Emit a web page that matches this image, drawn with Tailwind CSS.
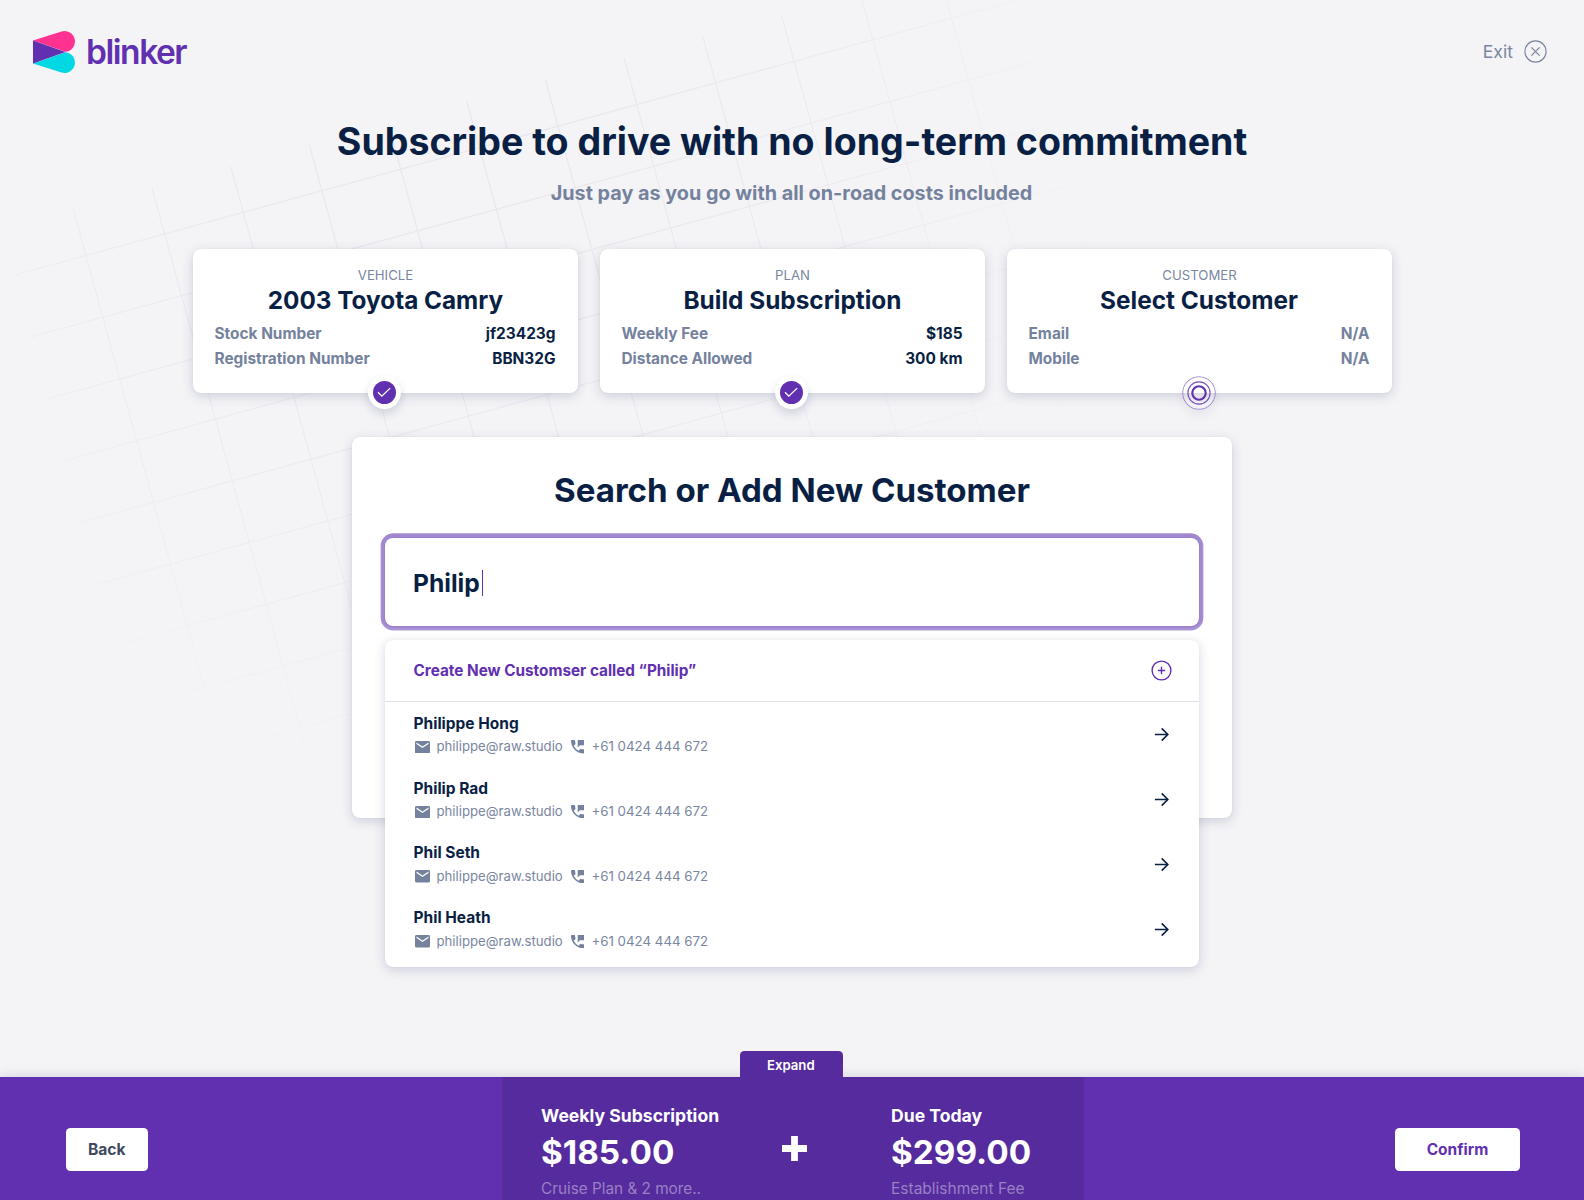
<!DOCTYPE html>
<html lang="en">
<head>
<meta charset="utf-8">
<title>Blinker – Subscribe</title>
<script src="https://cdn.jsdelivr.net/npm/@tailwindcss/browser@4"></script>
</head>
<body class="bg-[#f4f4f7] font-[Inter,'Liberation_Sans',sans-serif] text-[#0a1f44]">
<div class="relative isolate flex h-[1200px] w-[1584px] flex-col overflow-hidden">

  <!-- Decorative tilted grid -->
  <svg id="grid" class="absolute inset-0 -z-10" width="1584" height="1200" viewBox="0 0 1584 1200" fill="none">
    <defs>
      <radialGradient id="fade" gradientUnits="userSpaceOnUse" cx="470" cy="0" r="690">
        <stop offset="0" stop-color="#e5e5eb"/>
        <stop offset=".45" stop-color="#e9e9ee"/>
        <stop offset="1" stop-color="#f4f4f7"/>
      </radialGradient>
    </defs>
    <g transform="translate(13 275.5) rotate(-15.33)">
      <path stroke="url(#fade)" stroke-width="1.1" d="M0 0H1042M0 64H1042M0 128H1042M0 192H1042M0 256H1042M0 320H1042M0 384H1042M0 448H1042M0 512H1042M0 576H1042M75.6 -47.5V640M157.2 -47.5V640M238.8 -47.5V640M320.4 -47.5V640M402 -47.5V640M483.6 -47.5V640M565.2 -47.5V640M646.8 -47.5V640M728.4 -47.5V640M810 -47.5V640M891.6 -47.5V640M973.2 -47.5V640"/>
    </g>
  </svg>

  <header class="flex h-[103px] items-center justify-between pl-[33px] pr-[37px]">
    <div class="flex items-center gap-[12px]">
      <svg width="42" height="42" viewBox="0 0 42 42">
        <path fill="#ff3291" d="M0 9.6 28.5 .5A10.4 10.4 0 1 1 32.5 20.8L0 9.6Z"/>
        <path fill="#00d8e4" d="M0 32.4 28.5 41.5A10.4 10.4 0 1 0 32.5 21.2Z"/>
        <path fill="#6130b0" d="M0 9.6 32.5 21 0 32.4Z"/>
      </svg>
      <span class="-ml-px text-[33.5px] leading-[42px] font-semibold tracking-[-1.45px] text-[#6130b0]">blinker</span>
    </div>
    <div class="flex items-center gap-[11px] text-[#7a869f]">
      <span class="pt-px text-[17.6px] leading-6">Exit</span>
      <svg width="23" height="23" viewBox="0 0 23 23" fill="none" stroke="currentColor" stroke-width="1.1"><circle cx="11.5" cy="11.5" r="10.6"/><path stroke-width="1.3" d="m7.4 7.4 8.2 8.2M15.6 7.4l-8.2 8.2"/></svg>
    </div>
  </header>

  <h1 class="mt-[14.5px] text-center text-[37.55px] leading-[48px] font-bold">Subscribe to drive with no long-term commitment</h1>
  <p class="mt-[15px] pr-px text-center text-[19.8px] leading-[25px] font-bold text-[#75829d]">Just pay as you go with all on-road costs included</p>

  <section class="mt-[43px] flex justify-center gap-[22px]">
    <div class="relative h-[144px] w-[385px] rounded-[8px] bg-white px-[22px] pt-[19px] shadow-[0_0_1px_rgba(10,31,68,0.1),0_3px_12px_rgba(30,35,90,0.18)]">
      <p class="-mt-px pl-px text-center text-[13.2px] leading-[16.5px] text-[#7a869f]">VEHICLE</p>
      <h2 class="mt-px pl-px text-center text-[24.3px] leading-[33px] font-bold">2003 Toyota Camry</h2>
      <dl class="mt-[3.5px] text-[15.4px] leading-[25.4px] font-bold">
        <div class="flex justify-between"><dt class="text-[#75829d]">Stock Number</dt><dd>jf23423g</dd></div>
        <div class="flex justify-between"><dt class="text-[#75829d]">Registration Number</dt><dd>BBN32G</dd></div>
      </dl>
      <svg class="absolute -bottom-[16.5px] left-[175.5px] rounded-full shadow-[0_5px_10px_rgba(30,35,90,0.16)]" width="33" height="33" viewBox="0 0 33 33" fill="none"><circle cx="16.5" cy="16.5" r="16.5" fill="#fff"/><circle cx="16.5" cy="16.5" r="11.5" fill="#6130b0"/><path stroke="#fff" stroke-width="1.3" d="m10 16.3 3.8 3.9 8.4-8.1"/></svg>
    </div>
    <div class="relative h-[144px] w-[385px] rounded-[8px] bg-white px-[22px] pt-[19px] shadow-[0_0_1px_rgba(10,31,68,0.1),0_3px_12px_rgba(30,35,90,0.18)]">
      <p class="-mt-px pl-px text-center text-[13.2px] leading-[16.5px] text-[#7a869f]">PLAN</p>
      <h2 class="mt-px pl-px text-center text-[24.4px] leading-[33px] font-bold">Build Subscription</h2>
      <dl class="mt-[3.5px] text-[15.4px] leading-[25.4px] font-bold">
        <div class="flex justify-between"><dt class="text-[#75829d]">Weekly Fee</dt><dd>$185</dd></div>
        <div class="flex justify-between"><dt class="text-[#75829d]">Distance Allowed</dt><dd>300 km</dd></div>
      </dl>
      <svg class="absolute -bottom-[16.5px] left-[175.5px] rounded-full shadow-[0_5px_10px_rgba(30,35,90,0.16)]" width="33" height="33" viewBox="0 0 33 33" fill="none"><circle cx="16.5" cy="16.5" r="16.5" fill="#fff"/><circle cx="16.5" cy="16.5" r="11.5" fill="#6130b0"/><path stroke="#fff" stroke-width="1.3" d="m10 16.3 3.8 3.9 8.4-8.1"/></svg>
    </div>
    <div class="relative h-[144px] w-[385px] rounded-[8px] bg-white px-[22px] pt-[19px] shadow-[0_0_1px_rgba(10,31,68,0.1),0_3px_12px_rgba(30,35,90,0.18)]">
      <p class="-mt-px pl-px text-center text-[13.2px] leading-[16.5px] text-[#7a869f]">CUSTOMER</p>
      <h2 class="mt-px text-center text-[24.4px] leading-[33px] font-bold">Select Customer</h2>
      <dl class="mt-[3.5px] text-[15.4px] leading-[25.4px] font-bold text-[#75829d]">
        <div class="flex justify-between"><dt>Email</dt><dd>N/A</dd></div>
        <div class="flex justify-between"><dt>Mobile</dt><dd>N/A</dd></div>
      </dl>
      <svg class="absolute -bottom-[17px] left-[175.5px] rounded-full shadow-[0_5px_10px_rgba(30,35,90,0.07)]" width="34" height="34" viewBox="0 0 34 34" fill="none" stroke="#6130b0"><circle cx="17" cy="17" r="16.3" stroke-width="1.1" opacity=".5"/><circle cx="17" cy="17" r="11.1" stroke-width="1.1" opacity=".85"/><circle cx="17" cy="17" r="6.7" stroke-width="2.1"/></svg>
    </div>
  </section>

  <section class="relative mt-[44px] h-[381.5px] w-[880px] self-center rounded-[8px] bg-white px-[33px] pt-[33px] shadow-[0_0_1px_rgba(10,31,68,0.1),0_3px_12px_rgba(30,35,90,0.18)]">
    <h2 class="text-center text-[33.1px] leading-[40px] font-bold">Search or Add New Customer</h2>
    <div class="mt-[28px] flex h-[88.5px] items-center rounded-[8px] bg-white pl-[28px] shadow-[0_0_0_1px_#9a81c9,0_-1px_0_3.4px_#a188cf,0_0_0_4.4px_#ae96d9]">
      <span class="pt-[3px] text-[24.6px] leading-[30px] font-bold">Philip</span>
      <span class="mt-[2px] ml-[2px] h-[26px] w-px bg-[#6130b0]"></span>
    </div>

    <!-- Suggestion menu -->
    <div class="absolute top-[203px] left-[33px] h-[327px] w-[814px] rounded-[8px] bg-white shadow-[0_0_1px_rgba(10,31,68,0.1),0_3px_12px_rgba(30,35,90,0.18)]">
      <div class="flex h-[62px] items-center justify-between border-b border-[#dfe1e9] pr-[27px] pl-[28.5px] text-[#6130b0]">
        <span class="pt-[2px] text-[15.3px] leading-5 font-bold">Create New Customser called “Philip”</span>
        <svg width="21" height="21" viewBox="0 0 21 21" fill="none" stroke="currentColor" stroke-width="1.4"><circle cx="10.5" cy="10.5" r="9.4"/><path d="M10.5 6.8v7.4M6.8 10.5h7.4"/></svg>
      </div>
      <ul id="people"></ul>
    </div>
  </section>

  <footer class="relative mt-auto flex h-[123.5px] justify-between bg-[#6130b0] shadow-[0_-2px_10px_rgba(30,35,70,0.13)]">
    <button class="mt-[51.5px] ml-[66px] h-[43px] w-[81.5px] rounded-[4.4px] bg-white text-[15.6px] font-bold text-[#3f4a61]">Back</button>
    <div class="absolute left-[501.5px] flex h-full w-[582px] bg-[#562b9e] pl-[39.5px] text-white">
      <div class="absolute -top-[25.4px] left-[238.5px] h-[26px] w-[102.5px] rounded-t-[4.4px] bg-[#562b9e] pr-px text-center text-[13.2px] leading-[28px] font-semibold">Expand</div>
      <div class="w-[240.5px] pt-[27px]">
        <p class="text-[17.6px] leading-[23px] font-bold">Weekly Subscription</p>
        <p class="mt-[5.5px] text-[33.3px] leading-[40px] font-bold">$185.00</p>
        <p class="mt-[6px] text-[15.3px] leading-[22px] text-[#9a80c5]">Cruise Plan &amp; 2 more..</p>
      </div>
      <svg class="mt-[59.5px]" width="25" height="25" viewBox="0 0 25 25" fill="#fff"><path d="M9.1 0h6.8v9.1H25v6.8h-9.1V25H9.1v-9.1H0V9.1h9.1z"/></svg>
      <div class="pt-[27px] pl-[84.5px]">
        <p class="text-[17.6px] leading-[23px] font-bold">Due Today</p>
        <p class="mt-[5.5px] text-[33.3px] leading-[40px] font-bold">$299.00</p>
        <p class="mt-[6px] text-[15.5px] leading-[22px] text-[#9a80c5]">Establishment Fee</p>
      </div>
    </div>
    <button class="mt-[51.5px] mr-[64px] h-[43px] w-[125px] rounded-[4.4px] bg-white text-[15.5px] font-bold text-[#6130b0]">Confirm</button>
  </footer>
</div>

<template id="person">
  <li class="flex h-[64.9px] items-center justify-between pr-[29px] pl-[28.5px]">
    <div class="pt-[3px]">
      <p class="name text-[15.5px] leading-[22.8px] font-bold"></p>
      <p class="flex items-center text-[13.2px] leading-[22.8px] text-[#7a869f]">
        <svg class="ml-[1.5px]" width="15" height="12.4" viewBox="0 0 15 12.4"><path fill="#75829d" d="M1.5 0h12A1.5 1.5 0 0 1 15 1.5v9.4a1.5 1.5 0 0 1-1.5 1.5h-12A1.5 1.5 0 0 1 0 10.9V1.5A1.5 1.5 0 0 1 1.5 0Zm0 1.6v1.5l6 3.8 6-3.8V1.6l-6 3.8Z"/></svg>
        <span class="w-[141px] pl-[6.5px]">philippe@raw.studio</span>
        <svg width="13.4" height="13.4" viewBox="3 3 18 18"><path fill="#75829d" d="M12 3v10l3-3h6V3h-9Zm8 12.5c-1.25 0-2.45-.2-3.57-.57a1.02 1.02 0 0 0-1.02.24l-2.2 2.2a15.07 15.07 0 0 1-6.59-6.58l2.2-2.21c.28-.27.36-.66.25-1.01A11.36 11.36 0 0 1 8.5 4c0-.55-.45-1-1-1H4c-.55 0-1 .45-1 1 0 9.39 7.61 17 17 17 .55 0 1-.45 1-1v-3.5c0-.55-.45-1-1-1Z"/></svg>
        <span class="pl-[7px] text-[13.3px]">+61 0424 444 672</span>
      </p>
    </div>
    <svg class="mt-px" width="17" height="17" viewBox="0 0 17 17" fill="none" stroke="#0a1f44" stroke-width="1.6"><path d="M1.9 8.5h12.6M8.7 2.4l6.1 6.1-6.1 6.1"/></svg>
  </li>
</template>
<script>
  const list = document.getElementById('people');
  const row = document.getElementById('person');
  for (const name of ['Philippe Hong', 'Philip Rad', 'Phil Seth', 'Phil Heath']) {
    const item = row.content.cloneNode(true);
    item.querySelector('.name').textContent = name;
    list.append(item);
  }
</script>
</body>
</html>
